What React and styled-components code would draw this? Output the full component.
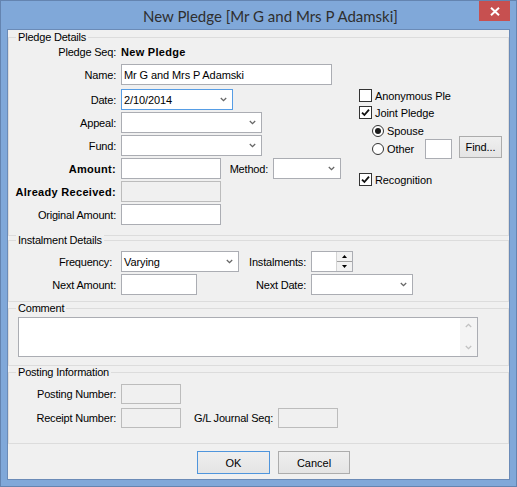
import React from 'react';
import styled, { createGlobalStyle } from 'styled-components';

const Global = createGlobalStyle`
  html, body { margin: 0; padding: 0; background: #7fa7d8; }
  body { font-family: "Liberation Sans", Arial, sans-serif; color: #000; }
  * { box-sizing: border-box; }
`;

const Window = styled.div`
  width: 517px;
  height: 487px;
  background: #80a8d9;
  border: 1px solid #6484b0;
  display: flex;
  flex-direction: column;
`;

const TitleBar = styled.div`
  height: 28px;
  display: flex;
  align-items: center;
  flex: none;
`;

const Title = styled.div`
  flex: 1;
  padding-left: 142px;
  padding-top: 1px;
  font-family: "Segoe UI", Lato, "Liberation Sans", sans-serif;
  font-size: 15px;
  color: #2f2f2f;
  white-space: nowrap;
`;

const CloseButton = styled.div`
  align-self: flex-start;
  width: 31px;
  height: 20px;
  margin-right: 6px;
  background: #c75050;
  display: flex;
  align-items: center;
  justify-content: center;
`;

const Client = styled.div`
  margin: 0 6px;
  height: 451px;
  flex: none;
  border: 1px solid #6b8bb7;
  background: #f0f0f0;
  display: flex;
  flex-direction: column;
`;

const GroupBox = styled.div`
  position: relative;
  border: 1px solid #dcdcdc;
  margin-top: ${p => p.$mt}px;
  padding: ${p => p.$pad};
  flex: none;
`;

const Legend = styled.span`
  position: absolute;
  top: -7px;
  left: 7px;
  padding: 0 2px;
  background: #f0f0f0;
  font-size: 11px;
  line-height: 13px;
  letter-spacing: -0.2px;
`;

const Columns = styled.div`
  display: flex;
`;

const LeftCol = styled.div`
  width: 350px;
  display: flex;
  flex-direction: column;
`;

const RightCol = styled.div`
  display: flex;
  flex-direction: column;
  padding-top: 47px;
`;

const Row = styled.div`
  display: flex;
  align-items: center;
  gap: 5px;
  height: ${p => p.$h ?? 23}px;
  margin-top: ${p => p.$mt ?? 0}px;
  flex: none;
`;

const Label = styled.span`
  flex: none;
  width: ${p => p.$w ?? 107}px;
  margin-left: ${p => p.$ml ?? 0}px;
  padding-right: ${p => p.$pr ?? 0}px;
  text-align: right;
  white-space: nowrap;
  font-size: 11px;
  font-weight: ${p => (p.$bold ? 700 : 400)};
  letter-spacing: ${p => (p.$bold ? '0.3px' : '-0.2px')};
`;

const Value = styled.span`
  font-size: 11px;
  font-weight: 700;
  letter-spacing: 0.3px;
  white-space: nowrap;
`;

const TextBox = styled.div`
  flex: none;
  width: ${p => p.$w}px;
  height: ${p => p.$h ?? 21}px;
  border: 1px solid ${p => (p.$disabled ? '#bcbcbc' : '#abadb3')};
  background: ${p => (p.$disabled ? '#f0f0f0' : '#fff')};
  padding: 0 2px;
  font-size: 11px;
  letter-spacing: -0.1px;
  display: flex;
  align-items: center;
  white-space: nowrap;
  overflow: hidden;
  margin-bottom: ${p => p.$mb ?? 0}px;
`;

const Combo = styled.div`
  flex: none;
  width: ${p => p.$w}px;
  height: 21px;
  border: 1px solid ${p => (p.$focus ? '#569de5' : '#abadb3')};
  background: #fff;
  padding: 0 5px 0 2px;
  font-size: 11px;
  letter-spacing: -0.1px;
  display: flex;
  align-items: center;
  justify-content: space-between;
  white-space: nowrap;
`;

const Slot = styled.div`
  flex: none;
  width: ${p => p.$w}px;
  display: flex;
`;

const Chevron = () => (
  <svg width="7" height="5" viewBox="0 0 7 5">
    <path d="M0.8 1 L3.5 3.7 L6.2 1" fill="none" stroke="#666" strokeWidth="1.3" />
  </svg>
);

const Spin = styled.div`
  flex: none;
  width: 42px;
  height: 21px;
  border: 1px solid #abadb3;
  background: #fff;
  display: flex;
  justify-content: flex-end;
`;

const SpinButtons = styled.div`
  width: 16px;
  display: flex;
  flex-direction: column;
  border-left: 1px solid #d4d4d4;
`;

const SpinHalf = styled.div`
  flex: 1;
  display: flex;
  align-items: center;
  justify-content: center;
  background: #f2f2f2;
  border-bottom: ${p => (p.$top ? '1px solid #a0a0a0' : 'none')};
`;

const CheckRow = styled.div`
  display: flex;
  align-items: center;
  gap: 3px;
  height: ${p => p.$h ?? 17}px;
  margin-top: ${p => p.$mt ?? 0}px;
  font-size: 11px;
  letter-spacing: -0.1px;
  white-space: nowrap;
`;

const CheckMark = styled.span`
  flex: none;
  width: 13px;
  height: 13px;
  border: 1px solid #333;
  background: #fff;
  display: flex;
  align-items: center;
  justify-content: center;
`;

const RadioGroup = styled.div`
  display: flex;
  flex-direction: column;
  padding-left: 13px;
`;

const RadioOption = styled.span`
  flex: none;
  width: ${p => p.$w ?? 'auto'};
  display: flex;
  align-items: center;
  gap: 3px;
`;

const RadioMark = styled.span`
  flex: none;
  width: 12px;
  height: 12px;
  border: 1px solid #333;
  border-radius: 50%;
  background: #fff;
  display: flex;
  align-items: center;
  justify-content: center;
  &::after {
    content: '';
    display: ${p => (p.$on ? 'block' : 'none')};
    width: 6px;
    height: 6px;
    border-radius: 50%;
    background: #1a1a1a;
  }
`;

const Button = styled.div`
  flex: none;
  width: ${p => p.$w}px;
  height: ${p => p.$h ?? 23}px;
  margin-left: ${p => p.$ml ?? 0}px;
  margin-bottom: ${p => p.$mb ?? 0}px;
  border: 1px solid ${p => (p.$default ? '#4f95dc' : '#acacac')};
  background: linear-gradient(#efefef, #e4e4e4);
  font-size: 11px;
  display: flex;
  align-items: center;
  justify-content: center;
  white-space: nowrap;
`;

const Memo = styled.div`
  width: 460px;
  height: 40px;
  border: 1px solid #abadb3;
  background: #fff;
  display: flex;
  justify-content: flex-end;
`;

const ScrollTrack = styled.div`
  width: 17px;
  background: #f4f4f4;
  display: flex;
  flex-direction: column;
  justify-content: space-between;
  align-items: center;
  padding: 5px 0 6px;
`;

const ButtonBar = styled.div`
  display: flex;
  gap: 8px;
  padding: 7px 0 0 189px;
`;

const Check = ({ on }) => (
  <CheckMark>
    {on && (
      <svg width="9" height="9" viewBox="0 0 9 9">
        <path d="M1 4.6 L3.4 7 L8 1.6" fill="none" stroke="#111" strokeWidth="1.8" />
      </svg>
    )}
  </CheckMark>
);

export default function App() {
  return (
    <>
      <Global />
      <Window>
        <TitleBar>
          <Title>New Pledge [Mr G and Mrs P Adamski]</Title>
          <CloseButton>
            <svg width="10" height="9" viewBox="0 0 10 9">
              <path d="M1 0.8 L9 8.2 M9 0.8 L1 8.2" stroke="#fff" strokeWidth="2" />
            </svg>
          </CloseButton>
        </TitleBar>
        <Client>
          <GroupBox $mt={7} $pad="2px 0 9px 0">
            <Legend>Pledge Details</Legend>
            <Columns>
              <LeftCol>
                <Row>
                  <Label>Pledge Seq:</Label>
                  <Value>New Pledge</Value>
                </Row>
                <Row>
                  <Label>Name:</Label>
                  <TextBox $w={211}>Mr G and Mrs P Adamski</TextBox>
                </Row>
                <Row $mt={2}>
                  <Label>Date:</Label>
                  <Combo $w={112} $focus>
                    <span>2/10/2014</span>
                    <Chevron />
                  </Combo>
                </Row>
                <Row>
                  <Label>Appeal:</Label>
                  <Combo $w={141}>
                    <span />
                    <Chevron />
                  </Combo>
                </Row>
                <Row>
                  <Label>Fund:</Label>
                  <Combo $w={141}>
                    <span />
                    <Chevron />
                  </Combo>
                </Row>
                <Row>
                  <Label $bold>Amount:</Label>
                  <TextBox $w={100} />
                  <Label $w={42}>Method:</Label>
                  <Combo $w={68}>
                    <span />
                    <Chevron />
                  </Combo>
                </Row>
                <Row>
                  <Label $bold>Already Received:</Label>
                  <TextBox $w={100} $disabled />
                </Row>
                <Row>
                  <Label>Original Amount:</Label>
                  <TextBox $w={100} />
                </Row>
              </LeftCol>
              <RightCol>
                <CheckRow>
                  <Check />
                  <span>Anonymous Ple</span>
                </CheckRow>
                <CheckRow>
                  <Check on />
                  <span>Joint Pledge</span>
                </CheckRow>
                <RadioGroup>
                  <CheckRow $mt={1}>
                    <RadioOption>
                      <RadioMark $on />
                      <span>Spouse</span>
                    </RadioOption>
                  </CheckRow>
                  <CheckRow $h={20}>
                    <RadioOption $w="50px">
                      <RadioMark />
                      <span>Other</span>
                    </RadioOption>
                    <TextBox $w={27} $h={20} />
                    <Button $w={43} $h={22} $ml={4} $mb={4}>Find...</Button>
                  </CheckRow>
                </RadioGroup>
                <CheckRow $mt={12}>
                  <Check on />
                  <span>Recognition</span>
                </CheckRow>
              </RightCol>
            </Columns>
          </GroupBox>

          <GroupBox $mt={4} $pad="9px 0 5px 0">
            <Legend>Instalment Details</Legend>
            <Row>
              <Label $pr={4}>Frequency:</Label>
              <Slot $w={118}>
                <Combo $w={118}>
                  <span>Varying</span>
                  <Chevron />
                </Combo>
              </Slot>
              <Label $w={62}>Instalments:</Label>
              <Spin>
                <SpinButtons>
                  <SpinHalf $top>
                    <svg width="5" height="3" viewBox="0 0 5 3"><path d="M0 3 L2.5 0 L5 3 Z" fill="#000" /></svg>
                  </SpinHalf>
                  <SpinHalf>
                    <svg width="5" height="3" viewBox="0 0 5 3"><path d="M0 0 L2.5 3 L5 0 Z" fill="#000" /></svg>
                  </SpinHalf>
                </SpinButtons>
              </Spin>
            </Row>
            <Row>
              <Label>Next Amount:</Label>
              <Slot $w={118}>
                <TextBox $w={76} />
              </Slot>
              <Label $w={62}>Next Date:</Label>
              <Combo $w={102}>
                <span />
                <Chevron />
              </Combo>
            </Row>
          </GroupBox>

          <GroupBox $mt={6} $pad="8px 9px 8px 9px">
            <Legend>Comment</Legend>
            <Memo>
              <ScrollTrack>
                <svg width="7" height="5" viewBox="0 0 7 5">
                  <path d="M0.8 4 L3.5 1.3 L6.2 4" fill="none" stroke="#c2c2c2" strokeWidth="1.3" />
                </svg>
                <svg width="7" height="5" viewBox="0 0 7 5">
                  <path d="M0.8 1 L3.5 3.7 L6.2 1" fill="none" stroke="#c2c2c2" strokeWidth="1.3" />
                </svg>
              </ScrollTrack>
            </Memo>
          </GroupBox>

          <GroupBox $mt={6} $pad="9px 0 13px 0">
            <Legend>Posting Information</Legend>
            <Row $h={24}>
              <Label>Posting Number:</Label>
              <TextBox $w={60} $h={20} $disabled />
            </Row>
            <Row $h={24}>
              <Label>Receipt Number:</Label>
              <TextBox $w={60} $h={20} $disabled />
              <Label $w={87}>G/L Journal Seq:</Label>
              <TextBox $w={60} $h={20} $disabled />
            </Row>
          </GroupBox>

          <ButtonBar>
            <Button $w={73} $default>OK</Button>
            <Button $w={72}>Cancel</Button>
          </ButtonBar>
        </Client>
      </Window>
    </>
  );
}
